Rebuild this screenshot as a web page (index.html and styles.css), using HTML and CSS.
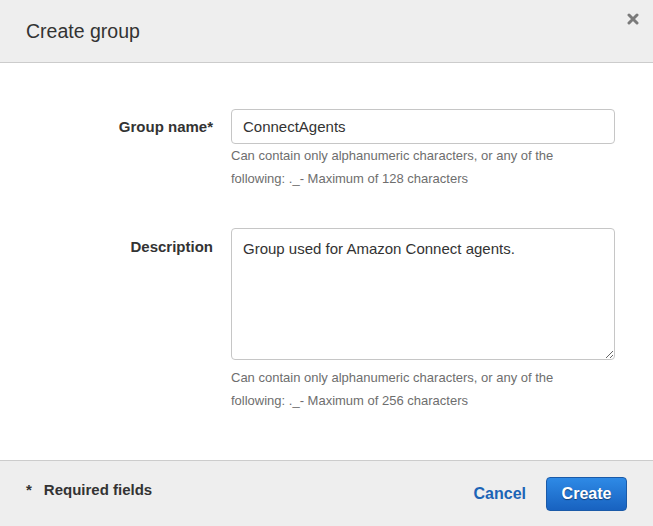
FILE: index.html
```html
<!DOCTYPE html>
<html>
<head>
<meta charset="utf-8">
<link rel="stylesheet" href="styles.css">
</head>
<body>
<div class="modal">
  <header class="modal-header">
    <h1 class="modal-title">Create group</h1>
    <button class="close" aria-label="Close">
      <svg width="12" height="12" viewBox="0 0 12 12"><path d="M2 2L10 10M10 2L2 10" stroke="#7a7a7a" stroke-width="3" stroke-linecap="round"/></svg>
    </button>
  </header>
  <main class="modal-body">
    <div class="form-row">
      <label class="form-label">Group name*</label>
      <div class="form-field">
        <input class="text-input" type="text" value="ConnectAgents" readonly>
        <p class="help">Can contain only alphanumeric characters, or any of the following: ._- Maximum of 128 characters</p>
      </div>
    </div>
    <div class="form-row row-desc">
      <label class="form-label label-desc">Description</label>
      <div class="form-field">
        <textarea class="text-area" readonly>Group used for Amazon Connect agents.</textarea>
        <p class="help">Can contain only alphanumeric characters, or any of the following: ._- Maximum of 256 characters</p>
      </div>
    </div>
  </main>
  <footer class="modal-footer">
    <div class="required"><span class="star">*</span>Required fields</div>
    <div class="actions">
      <a class="cancel">Cancel</a>
      <button class="primary">Create</button>
    </div>
  </footer>
</div>
</body>
</html>
```
FILE: styles.css
```css
html, body {
  margin: 0;
  padding: 0;
  background: #fff;
}
body {
  font-family: "Liberation Sans", Arial, sans-serif;
  color: #333;
}
.modal {
  width: 653px;
  height: 526px;
  display: flex;
  flex-direction: column;
}
.modal-header {
  height: 62px;
  background: #eeeeee;
  border-bottom: 1px solid #cccccc;
  display: flex;
  justify-content: space-between;
  align-items: flex-start;
  padding: 0 14px 0 26px;
}
.modal-title {
  margin: 0;
  font-size: 19.5px;
  font-weight: normal;
  color: #333;
  line-height: 62px;
}
.close {
  background: none;
  border: 0;
  padding: 0;
  margin-top: 13px;
  width: 12px;
  height: 12px;
  display: flex;
}
.modal-body {
  flex: 1;
  padding-top: 46px;
}
.form-row {
  display: flex;
  gap: 18px;
}
.row-desc {
  margin-top: 38px;
}
.form-label {
  width: 213px;
  flex: none;
  text-align: right;
  font-weight: bold;
  font-size: 15px;
  line-height: 35px;
  color: #333;
}
.label-desc {
  line-height: 38px;
}
.form-field {
  width: 384px;
}
.text-input, .text-area {
  display: block;
  box-sizing: border-box;
  width: 384px;
  margin: 0;
  border: 1px solid #c6c6c6;
  border-radius: 4px;
  font-family: "Liberation Sans", Arial, sans-serif;
  font-size: 15px;
  color: #333;
  background: #fff;
  outline: none;
}
.text-input {
  height: 35px;
  padding: 0 11px;
}
.text-area {
  height: 132px;
  padding: 10px 11px;
  line-height: 20px;
  resize: vertical;
  margin-bottom: 6px;
}
.help {
  margin: 0;
  font-size: 13px;
  line-height: 23px;
  color: #6e6e6e;
  max-width: 340px;
}
.modal-footer {
  height: 65px;
  background: #eeeeee;
  border-top: 1px solid #cccccc;
  display: flex;
  justify-content: space-between;
  align-items: center;
  padding: 0 26px 0 26px;
}
.required {
  font-weight: bold;
  font-size: 15px;
  color: #333;
  padding-bottom: 9px;
}
.star {
  margin-right: 12px;
}
.actions {
  display: flex;
  align-items: center;
  gap: 20px;
}
.cancel {
  color: #1c64b6;
  font-weight: bold;
  font-size: 16px;
}
.primary {
  height: 34px;
  width: 81px;
  border: 1px solid #1a5aa8;
  border-radius: 4px;
  background: linear-gradient(#2e8ae6, #1862c0);
  color: #fff;
  font-family: "Liberation Sans", Arial, sans-serif;
  font-weight: bold;
  font-size: 16px;
  text-shadow: 0 1px 1px rgba(0,0,0,0.45);
  padding: 0;
}
```
